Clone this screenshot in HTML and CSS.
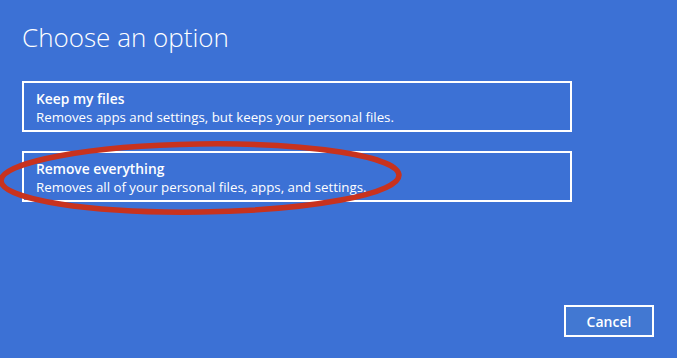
FILE: index.html
```html
<!DOCTYPE html>
<html>
<head>
<meta charset="utf-8">
<link rel="stylesheet" href="styles.css">
</head>
<body>
<div class="screen">
  <h1 class="title">Choose an option</h1>
  <div class="options">
    <div class="option">
      <div class="opt-title">Keep my files</div>
      <div class="opt-desc">Removes apps and settings, but keeps your personal files.</div>
    </div>
    <div class="option">
      <div class="opt-title">Remove everything</div>
      <div class="opt-desc">Removes all of your personal files, apps, and settings.</div>
    </div>
  </div>
  <div class="footer">
    <div class="btn">Cancel</div>
  </div>
  <svg class="mark" width="677" height="358" viewBox="0 0 677 358">
    <ellipse cx="200" cy="178" rx="199" ry="34" fill="none" stroke="#c8321e" stroke-width="5.5" transform="rotate(-0.8 200 178)"/>
  </svg>
</div>
</body>
</html>
```
FILE: styles.css
```css
html, body { margin: 0; padding: 0; }
body {
  width: 677px; height: 358px; overflow: hidden;
  background: #3c71d5;
  font-family: "Open Sans", "Noto Sans", sans-serif;
  color: #fff;
}
.screen {
  position: relative;
  width: 677px; height: 358px;
  box-sizing: border-box;
  padding: 0 0 0 22px;
  display: flex; flex-direction: column;
}
.title {
  margin: 19px 0 0 0;
  font-weight: 300;
  font-size: 26px;
  line-height: 36px;
  letter-spacing: 0;
}
.options {
  margin-top: 26px;
  display: flex; flex-direction: column; gap: 19px;
  width: 550px;
}
.option {
  box-sizing: border-box;
  height: 51px;
  border: 2px solid #fff;
  padding: 6px 12px 0 12px;
}
.opt-title {
  font-weight: 600;
  font-size: 13.8px;
  line-height: 19px;
}
.opt-desc {
  font-size: 13.3px;
  line-height: 19px;
}
.footer {
  margin-top: auto;
  display: flex; justify-content: flex-end;
  padding: 0 23px 21px 0;
}
.btn {
  box-sizing: border-box;
  width: 90px; height: 32px;
  border: 2px solid #fff;
  background: #4278d2;
  display: flex; align-items: center; justify-content: center;
  font-weight: 600;
  font-size: 14px;
}
.mark {
  position: absolute; left: 0; top: 0;
  pointer-events: none;
}
```
